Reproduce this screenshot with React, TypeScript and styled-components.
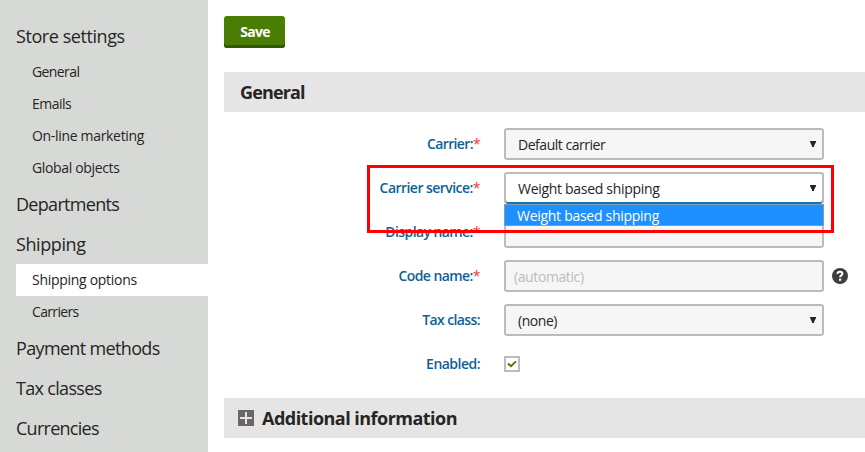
import React from "react";
import styled, { createGlobalStyle } from "styled-components";

const GlobalStyle = createGlobalStyle`
  * { box-sizing: border-box; }
  body {
    margin: 0;
    background: #fff;
    color: #262524;
    font: 14px/20px "Open Sans", "Noto Sans", sans-serif;
    overflow: hidden;
  }
`;

const Page = styled.div`
  display: flex;
  width: 865px;
  height: 452px;
  overflow: hidden;
`;

const Sidebar = styled.nav`
  width: 208px;
  flex: none;
  padding: 16px 0 0 16px;
  background: #d6d9d6;
`;

const NavHeading = styled.div<{ $spacing: number }>`
  height: 40px;
  font-size: 18px;
  line-height: 41px;
  letter-spacing: ${(p) => p.$spacing}px;
  white-space: nowrap;
`;

const NavItem = styled.div<{ $active?: boolean; $spacing: number }>`
  height: 32px;
  padding-left: 16px;
  font-size: 14px;
  line-height: 32px;
  letter-spacing: ${(p) => p.$spacing}px;
  background: ${(p) => (p.$active ? "#fff" : "transparent")};
  white-space: nowrap;
`;

const Main = styled.main`
  position: relative;
  flex: 1;
  padding: 16px 0 0 16px;
`;

const Toolbar = styled.div`
  height: 56px;
`;

const SaveButton = styled.button`
  display: block;
  width: 61px;
  height: 32px;
  padding: 0 0 1px 1px;
  border: 0;
  border-radius: 3px;
  background: #497d04;
  box-shadow: inset 0 -3px 0 #325903;
  color: #fff;
  font: 700 14px/30px "Open Sans", "Noto Sans", sans-serif;
  letter-spacing: -0.7px;
`;

const SectionBar = styled.h2<{ $expandable?: boolean }>`
  display: flex;
  align-items: center;
  gap: 8px;
  height: 40px;
  margin: 0;
  padding-left: ${(p) => (p.$expandable ? 14 : 16)}px;
  background: #e5e5e5;
  font-size: 18px;
  font-weight: 700;
  line-height: 40px;
  letter-spacing: ${(p) => (p.$expandable ? -0.52 : -0.85)}px;
  white-space: nowrap;
`;

const ExpandIcon = styled.svg`
  display: block;
  width: 16px;
  height: 16px;
`;

const Form = styled.div`
  display: grid;
  row-gap: 12px;
  padding: 16px 0 18px;
`;

const Row = styled.div`
  display: grid;
  grid-template-columns: 256px 320px 16px;
  column-gap: 24px;
  align-items: center;
  height: 32px;
`;

const Label = styled.label<{ $spacing: number }>`
  justify-self: end;
  color: #0f6194;
  font-weight: 600;
  line-height: 32px;
  letter-spacing: ${(p) => p.$spacing}px;
  white-space: nowrap;
`;

const Required = styled.span`
  color: #f33;
  font-weight: 400;
`;

const Field = styled.div<{ $open?: boolean; $input?: boolean; $spacing?: number }>`
  display: flex;
  align-items: center;
  justify-content: space-between;
  width: 320px;
  height: 32px;
  padding: 2px 6px ${(p) => (p.$open ? 2 : 0)}px ${(p) => (p.$input ? 8 : 12)}px;
  border: 2px solid #bdbbbb;
  border-bottom-width: ${(p) => (p.$open ? 0 : 2)}px;
  border-radius: 3px;
  box-shadow: ${(p) => (p.$open ? "inset 0 -2px 0 #1175ae" : "none")};
  background: ${(p) => (p.$open ? "#fff" : "#f6f6f6")};
  color: ${(p) => (p.$input ? "#bdbbbb" : "#262524")};
  letter-spacing: ${(p) => p.$spacing ?? -0.3}px;
  white-space: nowrap;
`;

const Arrow = styled.svg`
  display: block;
  flex: none;
  width: 6px;
  height: 6px;
  margin-top: -2px;
`;

const SelectWrap = styled.div`
  position: relative;
`;

const OptionList = styled.div`
  position: absolute;
  top: 32px;
  left: 0;
  z-index: 1;
  width: 320px;
  height: 22px;
  padding-left: 12px;
  border: 1px solid #7f9db9;
  background: #1e90ff;
  color: #fff;
  line-height: 21px;
  letter-spacing: -0.28px;
`;

const Highlight = styled.div`
  position: absolute;
  z-index: 2;
  top: 165px;
  left: 159px;
  width: 467px;
  height: 68px;
  border: 3px solid #fe0000;
`;

const Checkbox = styled.div`
  display: flex;
  align-items: center;
  justify-content: center;
  width: 16px;
  height: 16px;
  border: 2px solid #bdbbbb;
  background: #fff;
`;

const Help = styled.svg`
  display: block;
  width: 16px;
  height: 16px;
  margin-left: -16px;
`;

function Caret() {
  return (
    <Arrow viewBox="0 0 6 6">
      <path d="M0 0h6v1L4 5v1H2V5L0 1z" fill="#262524" />
    </Arrow>
  );
}

interface FormRowProps {
  label: string;
  required?: boolean;
  spacing: number;
  help?: boolean;
  children: React.ReactNode;
}

function FormRow({ label, required, spacing, help, children }: FormRowProps) {
  return (
    <Row>
      <Label $spacing={spacing}>
        {label}
        {required && <Required>*</Required>}
      </Label>
      {children}
      {help && (
        <Help viewBox="0 0 16 16">
          <circle cx="8" cy="8" r="8" fill="#403e3d" />
          <path d="M5.4 5.9C5.5 4.4 6.6 3.8 8 3.8c1.5 0 2.4.8 2.4 1.9 0 1.7-2.3 1.6-2.3 3.5" fill="none" stroke="#fff" strokeWidth="2" />
          <path d="M7 10.6h2.2v2.2H7z" fill="#fff" />
        </Help>
      )}
    </Row>
  );
}

export default function App() {
  return (
    <Page>
      <GlobalStyle />
      <Sidebar>
        <NavHeading $spacing={-0.43}>Store settings</NavHeading>
        <NavItem $spacing={-0.6}>General</NavItem>
        <NavItem $spacing={-0.5}>Emails</NavItem>
        <NavItem $spacing={-0.32}>On-line marketing</NavItem>
        <NavItem $spacing={-0.35}>Global objects</NavItem>
        <NavHeading $spacing={-0.7}>Departments</NavHeading>
        <NavHeading $spacing={-0.4}>Shipping</NavHeading>
        <NavItem $active $spacing={-0.29}>Shipping options</NavItem>
        <NavItem $spacing={-0.65}>Carriers</NavItem>
        <NavHeading $spacing={-0.65}>Payment methods</NavHeading>
        <NavHeading $spacing={-0.68}>Tax classes</NavHeading>
        <NavHeading $spacing={-0.73}>Currencies</NavHeading>
      </Sidebar>
      <Main>
        <Toolbar>
          <SaveButton>Save</SaveButton>
        </Toolbar>
        <SectionBar>General</SectionBar>
        <Form>
          <FormRow label="Carrier:" required spacing={-0.63}>
            <Field $spacing={-0.47}>Default carrier<Caret /></Field>
          </FormRow>
          <FormRow label="Carrier service:" required spacing={-0.54}>
            <SelectWrap>
              <Field $open>Weight based shipping<Caret /></Field>
              <OptionList>Weight based shipping</OptionList>
            </SelectWrap>
          </FormRow>
          <FormRow label="Display name:" required spacing={-0.58}>
            <Field $input />
          </FormRow>
          <FormRow label="Code name:" required spacing={-0.57} help>
            <Field $input $spacing={-0.4}>(automatic)</Field>
          </FormRow>
          <FormRow label="Tax class:" spacing={-0.6}>
            <Field $spacing={-0.45}>(none)<Caret /></Field>
          </FormRow>
          <FormRow label="Enabled:" spacing={-0.52}>
            <Checkbox>
              <svg width="10" height="8" viewBox="0 0 10 8">
                <path d="M1 3.4 4 6.2 9 1.4" fill="none" stroke="#497d04" strokeWidth="2" />
              </svg>
            </Checkbox>
          </FormRow>
        </Form>
        <SectionBar $expandable>
          <ExpandIcon viewBox="0 0 16 16">
            <path d="M0 0h16v16H0z" fill="#696663" />
            <path d="M7 2h2v5h5v2H9v5H7V9H2V7h5z" fill="#e5e5e5" />
          </ExpandIcon>
          Additional information
        </SectionBar>
        <Highlight />
      </Main>
    </Page>
  );
}
